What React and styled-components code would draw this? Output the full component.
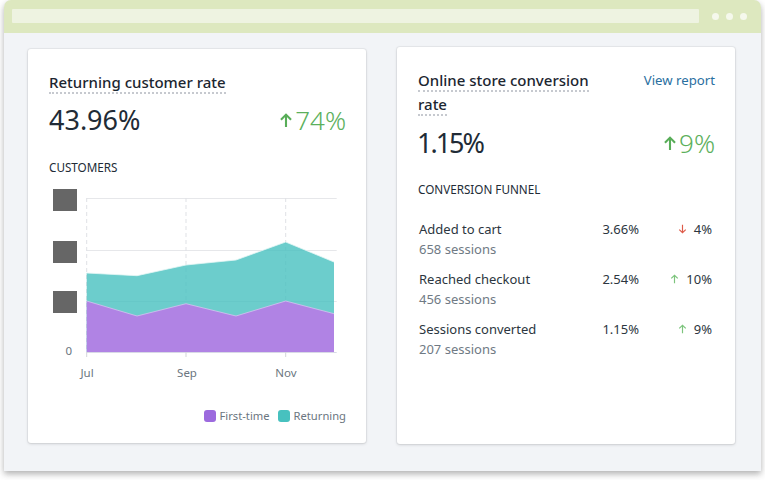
import React from "react";
import styled, { createGlobalStyle } from "styled-components";

const Global = createGlobalStyle`
  html, body { margin: 0; padding: 0; background: #fff; }
  body { font-family: "Noto Sans", "Open Sans", "Liberation Sans", sans-serif; color: #212b36; }
`;

const Page = styled.div`
  width: 765px;
  height: 480px;
  padding: 0 4px;
  box-sizing: border-box;
  overflow: hidden;
`;
const Window = styled.div`
  width: 757px;
  height: 471px;
  display: flex;
  flex-direction: column;
  border-radius: 7px 7px 0 0;
  background: #f2f4f7;
  box-shadow: 0 3px 6px rgba(60, 60, 60, 0.4);
`;
const TitleBar = styled.div`
  height: 33px;
  flex: none;
  display: flex;
  align-items: center;
  padding: 0 12px 0 8px;
  gap: 10px;
  background: #dde8bf;
  border-radius: 7px 7px 0 0;
  box-sizing: border-box;
`;
const UrlBar = styled.div`
  width: 687px;
  height: 14px;
  margin-top: -1px;
  background: #eef3e1;
  border-radius: 1px;
`;
const Dots = styled.div`
  display: flex;
  gap: 7px;
  margin-left: 3px;
  margin-top: -1px;
`;
const Dot = styled.span`
  width: 7px;
  height: 7px;
  border-radius: 50%;
  background: #f5f8ec;
`;
const Content = styled.div`
  flex: 1;
  display: flex;
  align-items: flex-start;
  gap: 31px;
  padding: 0 24px;
`;
const Card = styled.section`
  width: 338px;
  height: ${(p) => p.$h}px;
  margin-top: ${(p) => p.$top}px;
  padding: 21px 20px 0 21px;
  box-sizing: border-box;
  background: #fff;
  border-radius: 3px;
  box-shadow: 0 0 0 1px rgba(63, 63, 68, 0.05), 0 1px 3px rgba(63, 63, 68, 0.18);
`;
const Head = styled.div`
  display: flex;
  justify-content: space-between;
  align-items: flex-start;
`;
const Title = styled.h2`
  margin: 0;
  max-width: 190px;
  font-size: 15px;
  font-weight: 500;
  line-height: 24px;
  color: #1c2630;
`;
const Dotted = styled.span`
  border-bottom: 2px dotted #c6c9cf;
`;
const Link = styled.a`
  font-size: 13.2px;
  line-height: 24px;
  color: #2a6f9f;
`;
const Stats = styled.div`
  display: flex;
  justify-content: space-between;
  align-items: center;
  height: 36px;
  margin-top: ${(p) => p.$gap}px;
`;
const Value = styled.div`
  font-size: 27px;
  line-height: 36px;
  letter-spacing: ${(p) => p.$spacing}px;
  margin-left: ${(p) => (p.$spacing < -1 ? -1 : 0)}px;
  color: #212b36;
`;
const Delta = styled.div`
  display: flex;
  align-items: center;
  gap: 2px;
  font-size: 26px;
  line-height: 36px;
  font-weight: 300;
  color: #5cb05c;
`;
const Section = styled.h3`
  margin: ${(p) => p.$gap}px 0 0;
  font-size: 11.7px;
  font-weight: 400;
  line-height: 16px;
  color: #212b36;
`;
const ChartWrap = styled.div`
  margin: 5px 0 0;
  width: 297px;
  height: 200px;
`;
const Legend = styled.div`
  display: flex;
  justify-content: flex-end;
  align-items: center;
  gap: 8px;
  margin-top: 28px;
  font-size: 11.2px;
  line-height: 16px;
  color: #6b7680;
`;
const LegendItem = styled.span`
  display: flex;
  align-items: center;
  gap: 4px;
`;
const Swatch = styled.i`
  width: 12px;
  height: 12px;
  border-radius: 3px;
  background: ${(p) => p.$c};
`;
const Funnel = styled.div`
  margin-top: 22px;
  padding-left: 1px;
  display: flex;
  flex-direction: column;
  gap: 10px;
  width: 293px;
`;
const Row = styled.div`
  display: grid;
  grid-template-columns: 1fr 60px 73px;
  font-size: 13px;
  line-height: 20px;
`;
const Label = styled.div`
  color: #2c3640;
`;
const Sessions = styled.div`
  color: #6f7a84;
`;
const Pct = styled.div`
  text-align: right;
  color: #2c3640;
`;
const Change = styled.div`
  display: flex;
  justify-content: flex-end;
  align-items: center;
  align-self: start;
  gap: 7px;
  height: 20px;
  color: #2c3640;
`;

const Arrow = ({ size = 10, h = 10, color, down, w = 1.3 }) => (
  <svg width={size} height={h} viewBox="0 0 10 10" fill="none" style={down ? { transform: "rotate(180deg)" } : undefined}>
    <path d="M5 9.6V.8M1.4 4.4 5 .8l3.6 3.6" stroke={color} strokeWidth={w} />
  </svg>
);

const grid = [198, 250, 301];
const X0 = 49, Y0 = 180;
const pts = (a) => a.map(([x, y]) => `${x - X0},${y - Y0}`).join(" ");
const teal = [[86.7, 273], [137, 275.7], [186, 265], [236, 260], [285.7, 242], [334, 262]];
const purple = [[86.7, 301], [137, 316], [186, 303.7], [236, 316], [285.7, 301], [334, 313.7]];

const Chart = () => (
  <svg width="297" height="200" viewBox="0 0 297 200">
    {grid.map((y) => (
      <line key={y} x1={86.7 - X0} x2={336.7 - X0} y1={y - Y0 + 0.5} y2={y - Y0 + 0.5} stroke="#e6e7ea" />
    ))}
    {[86.7, 186, 285.7].map((x) => (
      <line key={x} x1={x - X0} x2={x - X0} y1={198 - Y0} y2={352 - Y0} stroke="#dfe1e5" strokeDasharray="4 3" />
    ))}
    <polygon points={pts([...teal, [334, 352], [86.7, 352]])} fill="#47c1bf" fillOpacity="0.8" />
    <polyline points={pts(teal)} fill="none" stroke="#e4f6f5" strokeWidth="0.8" />
    <polygon points={pts([...purple, [334, 352], [86.7, 352]])} fill="#b083e4" />
    <polyline points={pts(purple)} fill="none" stroke="#d5c3f0" strokeWidth="0.8" />
    <line x1={86.7 - X0} x2={336.7 - X0} y1={352.5 - Y0} y2={352.5 - Y0} stroke="#d8d9e6" />
    {[86.7, 186, 285.7].map((x) => (
      <line key={x} x1={x - X0} x2={x - X0} y1={352 - Y0} y2={357 - Y0} stroke="#d3d5da" />
    ))}
    {[189, 241, 291].map((y) => (
      <rect key={y} x={53 - X0} y={y - Y0} width="24" height="22" fill="#666666" />
    ))}
    <g fontSize="11.5" fill="#6b7680" fontFamily="Noto Sans, sans-serif">
      <text x={72 - X0} y={355 - Y0} textAnchor="end">0</text>
      <text x={87 - X0} y={377 - Y0} textAnchor="middle">Jul</text>
      <text x={187 - X0} y={377 - Y0} textAnchor="middle">Sep</text>
      <text x={286 - X0} y={377 - Y0} textAnchor="middle">Nov</text>
    </g>
  </svg>
);

const rows = [
  { name: "Added to cart", sessions: "658 sessions", pct: "3.66%", change: "4%", down: true },
  { name: "Reached checkout", sessions: "456 sessions", pct: "2.54%", change: "10%" },
  { name: "Sessions converted", sessions: "207 sessions", pct: "1.15%", change: "9%" },
];

export default function App() {
  return (
    <Page>
      <Global />
      <Window>
        <TitleBar>
          <UrlBar />
          <Dots>
            <Dot />
            <Dot />
            <Dot />
          </Dots>
        </TitleBar>
        <Content>
          <Card $top={16} $h={394}>
            <Title>
              <Dotted>Returning customer rate</Dotted>
            </Title>
            <Stats $gap={8}>
              <Value $spacing={0}>43.96%</Value>
              <Delta>
                <Arrow size={14} h={17} color="#58ad58" w={1.5} />
                74%
              </Delta>
            </Stats>
            <Section $gap={21}>CUSTOMERS</Section>
            <ChartWrap>
              <Chart />
            </ChartWrap>
            <Legend>
              <LegendItem>
                <Swatch $c="#9c6ade" />
                First-time
              </LegendItem>
              <LegendItem>
                <Swatch $c="#47c1bf" />
                Returning
              </LegendItem>
            </Legend>
          </Card>
          <Card $top={14} $h={397}>
            <Head>
              <Title>
                <Dotted>Online store conversion rate</Dotted>
              </Title>
              <Link>View report</Link>
            </Head>
            <Stats $gap={9}>
              <Value $spacing={-2}>1.15%</Value>
              <Delta>
                <Arrow size={14} h={17} color="#58ad58" w={1.5} />
                9%
              </Delta>
            </Stats>
            <Section $gap={20}>CONVERSION FUNNEL</Section>
            <Funnel>
              {rows.map((r) => (
                <Row key={r.name}>
                  <div>
                    <Label>{r.name}</Label>
                    <Sessions>{r.sessions}</Sessions>
                  </div>
                  <Pct>{r.pct}</Pct>
                  <Change>
                    <Arrow size={9} h={10} color={r.down ? "#de5b49" : "#7cc47c"} down={r.down} />
                    {r.change}
                  </Change>
                </Row>
              ))}
            </Funnel>
          </Card>
        </Content>
      </Window>
    </Page>
  );
}
